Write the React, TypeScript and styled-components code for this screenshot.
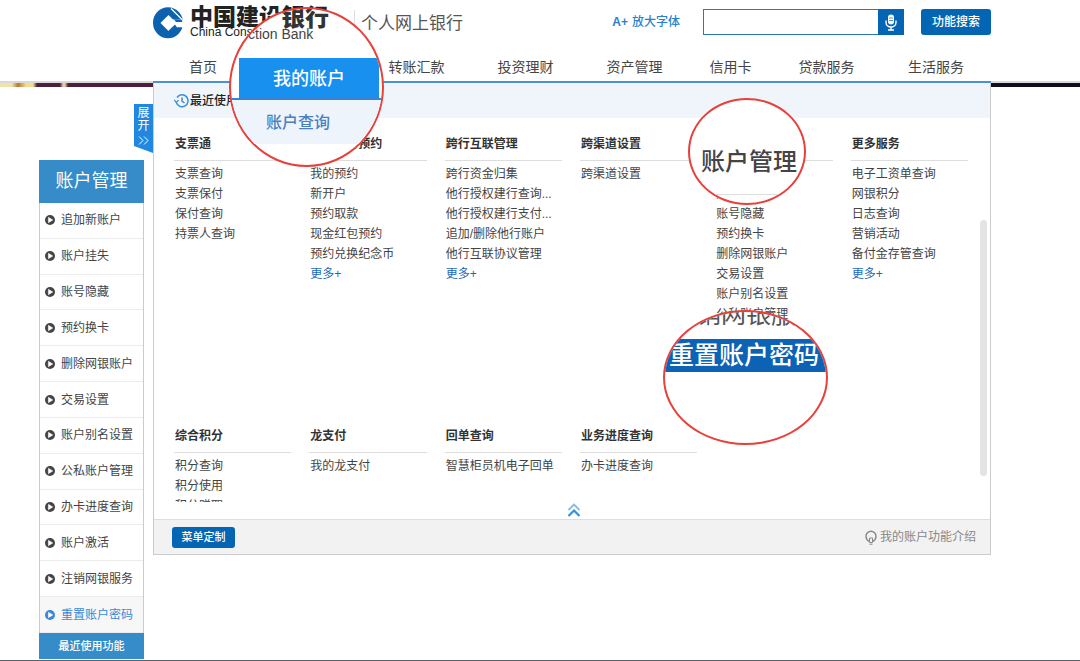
import React from "react";
import styled, { createGlobalStyle, css } from "styled-components";

const GlobalStyle = createGlobalStyle`
  * { box-sizing: border-box; }
  body {
    margin: 0;
    background: #fff;
    color: #444;
    font: 12px/20px "Liberation Sans", "Noto Sans CJK SC", sans-serif;
  }
  a { color: inherit; text-decoration: none; }
  button, input { font: inherit; }
  ul, h1, h2, p { margin: 0; padding: 0; list-style: none; font-weight: 400; }
  svg { display: block; flex: none; }
`;

const Page = styled.div`
  position: relative;
  display: flex;
  flex-direction: column;
  min-height: 100vh;
`;

/* ---------- header ---------- */

const Header = styled.header`
  padding: 0 89px 0 153px;
  border-bottom: 2px solid #d9d9dc;
`;

const TopRow = styled.div`
  display: flex;
  align-items: flex-start;
  height: 52px;
  padding-top: 7px;
`;

const Brand = styled.a`
  display: flex;
  gap: 7px;
`;

const BrandText = styled.span`
  display: flex;
  flex-direction: column;
  padding-top: 1px;
  color: #222;
`;

const BrandName = styled.strong`
  font-size: 23px;
  line-height: 18px;
  font-weight: 900;
`;

const BrandEnglish = styled.span`
  font-size: 12px;
  line-height: 12px;
`;

const SiteTitle = styled.h1`
  margin: 3px 0 0 26px;
  padding-left: 6px;
  border-left: 1px solid #ddd;
  font-size: 17px;
  line-height: 27px;
  color: #555;
`;

const Tools = styled.div`
  display: flex;
  align-items: center;
  height: 26px;
  margin: 2px 0 0 auto;
`;

const FontSizeLink = styled.a`
  display: flex;
  gap: 4px;
  margin-right: 23px;
  color: #2a80d0;
  font-weight: 500;
`;

const SearchBox = styled.form`
  display: flex;
  height: 26px;
`;

const SearchInput = styled.input`
  width: 175px;
  height: 26px;
  padding: 0 6px;
  border: 1px solid #2a7ab8;
  border-right: 0;
  outline: none;
`;

const MicButton = styled.button`
  display: grid;
  place-items: center;
  width: 26px;
  padding: 0;
  border: 0;
  background: #0565b5;
`;

const PrimaryButton = styled.button<{ $small?: boolean }>`
  padding: 0;
  border: 0;
  border-radius: 3px;
  background: #0565b5;
  color: #fff;
  font-weight: 500;
  ${(p) =>
    p.$small
      ? css`
          width: 63px;
          height: 21px;
          font-size: 11px;
        `
      : css`
          width: 70px;
          height: 26px;
          margin-left: 17px;
        `}
`;

const Nav = styled.nav`
  display: grid;
  grid-template-columns: 100fr 109fr 109fr 109fr 109fr 83fr 109fr 110fr;
  height: 31px;
  margin-bottom: -2px;
  border-bottom: 2px solid #4a90d9;
`;

const NavLink = styled.a`
  font-size: 14px;
  line-height: 30px;
  text-align: center;
`;

/* ---------- body ---------- */

const Body = styled.main`
  display: grid;
  grid-template-columns: 153px 1fr 89px;
  align-items: start;
  flex: 1;
`;

const SideColumn = styled.div`
  display: flex;
  flex-direction: column;
`;

const BannerStrip = styled.div<{ $left?: boolean }>`
  height: 4px;
  background: ${(p) =>
    p.$left
      ? "linear-gradient(90deg, #f0e2a8 0 12px, #b5762f 18px, #f3dc8e 26px 33px, #4d1f3c 37px 60px, #e8c9a0 63px 65px, #4d1f3c 68px)"
      : "#120d1e"};
`;

const ExpandTab = styled.button`
  display: flex;
  flex-direction: column;
  align-items: center;
  align-self: flex-end;
  width: 19px;
  height: 49px;
  margin-top: 17px;
  padding: 3px 0 0;
  border: 0;
  background: #2088e0;
  clip-path: polygon(0 0, 100% 0, 100% 100%, 0 42px);
  color: #fff;
  line-height: 13px;
`;

const ExpandArrow = styled.span`
  margin-top: 3px;
`;

const Sidebar = styled.aside`
  align-self: flex-end;
  width: 105px;
  margin: 7px 9px 0 0;
`;

const SidebarTitle = styled.h2`
  height: 43px;
  background: #358cc8;
  color: #fff;
  font-size: 18px;
  line-height: 43px;
  text-align: center;
`;

const SidebarList = styled.ul`
  display: grid;
  grid-auto-rows: 1fr;
  height: 430px;
  border: solid #ccc;
  border-width: 0 1px;
`;

const SidebarItem = styled.li<{ $active?: boolean }>`
  display: flex;
  border-bottom: 1px solid #ececec;
  background: ${(p) => (p.$active ? "#f7f7f7" : "#fff")};
  color: ${(p) => (p.$active ? "#3a88d6" : "#444")};
`;

const SidebarLink = styled.a`
  display: flex;
  align-items: center;
  gap: 6px;
  padding-left: 5px;
`;

const RecentButton = styled.button`
  display: block;
  width: 100%;
  height: 26px;
  padding: 0;
  border: 0;
  background: #358cc8;
  color: #fff;
  font-size: 11px;
  font-weight: 500;
`;

/* ---------- menu panel ---------- */

const Panel = styled.section`
  position: relative;
  border: solid #ccc;
  border-width: 0 1px 1px;
  background: #fff;
`;

const RecentBar = styled.div`
  display: flex;
  align-items: center;
  gap: 1px;
  height: 35px;
  padding-left: 20px;
  background: #eff5fb;
  color: #222;
  font-weight: 500;
`;

const Groups = styled.div`
  display: grid;
  grid-template-columns: repeat(6, 1fr);
  grid-auto-rows: 292px;
  column-gap: 18px;
  height: 384px;
  padding: 16px 22px 0 20px;
  overflow: hidden;
`;

const Group = styled.section`
  min-width: 0;
  padding-left: 1px;
  white-space: nowrap;
`;

const GroupTitle = styled.h2`
  margin: 0 0 3px -1px;
  padding: 0 0 6px 1px;
  border-bottom: 1px solid #ddd;
  font-size: 12px;
  font-weight: 700;
  color: #333;
`;

const GroupLink = styled.a<{ $more?: boolean }>`
  display: block;
  color: ${(p) => (p.$more ? "#1a69b8" : "#444")};
`;

const ScrollThumb = styled.div`
  position: absolute;
  top: 137px;
  right: 3px;
  width: 7px;
  height: 256px;
  border-radius: 4px;
  background: #e4e4e4;
`;

const CollapseButton = styled.button`
  display: block;
  width: 24px;
  height: 17px;
  margin: 0 auto;
  padding: 0 0 2px 7px;
  border: 0;
  background: none;
`;

const PanelFooter = styled.footer`
  display: flex;
  align-items: center;
  justify-content: space-between;
  height: 35px;
  padding: 0 14px 0 18px;
  border-top: 1px solid #cfe2f2;
  background: #f2f2f2;
`;

const IntroLink = styled.a`
  display: flex;
  align-items: center;
  gap: 3px;
  color: #888;
`;

const BottomEdge = styled.div`
  height: 1px;
  background: #59636f;
`;

/* ---------- magnifier circles ---------- */

const Lens = styled.div<{ $x: number; $y: number; $w: number; $h: number }>`
  position: absolute;
  left: ${(p) => p.$x}px;
  top: ${(p) => p.$y}px;
  width: ${(p) => p.$w}px;
  height: ${(p) => p.$h}px;
  overflow: hidden;
  border: 2px solid #e8403a;
  border-radius: 50%;
  background: #fff;
  white-space: nowrap;
`;

const LensBrand = styled.div`
  height: 49px;
  color: #333;
`;

const LensBrandName = styled.p`
  padding-left: 50px;
  font-size: 24px;
  line-height: 17px;
  font-weight: 900;
`;

const LensBrandEnglish = styled.p`
  padding-left: 17px;
  font-size: 14px;
  line-height: 16px;
  color: #444;
`;

const LensTab = styled.p`
  height: 40px;
  margin: 0 3px 0 8px;
  background: #1890f0;
  color: #fff;
  font-size: 18px;
  line-height: 42px;
  font-weight: 500;
  text-align: center;
`;

const LensSubmenu = styled.p`
  height: 46px;
  padding-left: 35px;
  border-top: 2px solid #3b82d0;
  background: #edf4fb;
  color: #4a80c0;
  font-size: 16px;
  line-height: 46px;
  font-weight: 500;
`;

const LensHeading = styled.p`
  margin-top: 46px;
  padding-left: 11px;
  color: #444;
  font-size: 24px;
  line-height: 32px;
  font-weight: 500;
`;

const LensRule = styled.div`
  height: 1px;
  margin: 16px 20px 0 25px;
  background: #ddd;
`;

const LensRow = styled.p`
  height: 27px;
  padding-left: 6px;
  font-size: 25px;
  line-height: 4px;
  color: #555;
`;

const LensSelected = styled.p`
  height: 33px;
  padding-left: 4px;
  background: #0c62b4;
  color: #fff;
  font-size: 25px;
  line-height: 33px;
  font-weight: 500;
`;

/* ---------- icons ---------- */

const BankLogo = () => (
  <svg width="30" height="32" viewBox="0 0 30 32" aria-hidden="true">
    <ellipse cx="15" cy="15.800" rx="15" ry="15.500" fill="#0d62b0" />
    <path d="M7.500 16L15.500 8 23.500 16 15.500 24z" fill="#fff" />
    <path d="M20 12.500H30V20.500H20z" fill="#fff" />
    <path d="M21 12.500h7.500l1 2.500h-6.500z" fill="#0d62b0" />
    <path d="M15.500 24L22 17.500l2 3H29L24 27z" fill="#0d62b0" />
    <path d="M18 1.500L29 12.500" stroke="#fff" strokeWidth="1.200" />
  </svg>
);

const MicIcon = () => (
  <svg width="12" height="17" viewBox="0 0 12 17" fill="none" stroke="#fff" aria-hidden="true">
    <rect x="3" y="0.5" width="6" height="10" rx="3" fill="#fff" stroke="none" />
    <path d="M1 6.500v2a5 4.500 0 0 0 10 0v-2M6 13v3M3 16h6" strokeWidth="1.400" />
    <path d="M4 4h4M4 6.500h4" stroke="#0565b5" strokeWidth="0.700" />
  </svg>
);

const HistoryIcon = () => (
  <svg width="15" height="14" viewBox="0 0 15 14" fill="none" stroke="#3a8fd8" strokeWidth="1.500" aria-hidden="true">
    <path d="M2.300 8.500A6 6 0 1 0 3 3.500" />
    <path d="M0.300 5.800L2.200 8.400 4.600 6.200" strokeWidth="1.200" />
    <path d="M8 3.500V7.200L10.500 9" />
  </svg>
);

const PlayIcon = () => (
  <svg width="10" height="10" viewBox="0 0 10 10" aria-hidden="true">
    <circle cx="5" cy="5" r="5" fill="currentColor" />
    <path d="M3.400 2.300L7.800 5 3.400 7.700z" fill="#fff" stroke="#fff" strokeWidth="0.500" />
  </svg>
);

const ExpandIcon = () => (
  <svg width="11" height="9" viewBox="0 0 11 9" fill="none" stroke="#fff" aria-hidden="true">
    <path d="M1 .5L5 4.500 1 8.500M6 .5L10 4.500 6 8.500" />
  </svg>
);

const CollapseIcon = () => (
  <svg width="14" height="14" viewBox="0 0 14 14" fill="none" strokeWidth="1.800" aria-hidden="true">
    <path d="M1.500 7L7 1.500 12.500 7" stroke="#82bce8" />
    <path d="M1.500 13L7 7.500 12.500 13" stroke="#3191dc" strokeWidth="2.200" />
  </svg>
);

const BulbIcon = () => (
  <svg width="12" height="15" viewBox="0 0 12 15" fill="none" stroke="#888" strokeWidth="1.400" aria-hidden="true">
    <path d="M4 11.300C2 10.300 1 8.500 1 6.300a5 5 0 0 1 10 0c0 2.200-1 4-3 5" />
    <path d="M4.500 12.500V8h3v4.500z" strokeWidth="1" />
    <path d="M4.500 14.200h3" strokeWidth="1" />
  </svg>
);

/* ---------- data ---------- */

const navItems = ["首页", "我的账户", "转账汇款", "投资理财", "资产管理", "信用卡", "贷款服务", "生活服务"];

const accountItems = [
  "追加新账户",
  "账户挂失",
  "账号隐藏",
  "预约换卡",
  "删除网银账户",
  "交易设置",
  "账户别名设置",
  "公私账户管理",
  "办卡进度查询",
  "账户激活",
  "注销网银服务",
  "重置账户密码",
];

const groups: { title: string; items: string[]; more?: boolean }[] = [
  { title: "支票通", items: ["支票查询", "支票保付", "保付查询", "持票人查询"] },
  { title: "网点业务预约", items: ["我的预约", "新开户", "预约取款", "现金红包预约", "预约兑换纪念币"], more: true },
  {
    title: "跨行互联管理",
    items: ["跨行资金归集", "他行授权建行查询...", "他行授权建行支付...", "追加/删除他行账户", "他行互联协议管理"],
    more: true,
  },
  { title: "跨渠道设置", items: ["跨渠道设置"] },
  { title: "账户管理", items: accountItems.slice(0, 8) },
  { title: "更多服务", items: ["电子工资单查询", "网银积分", "日志查询", "营销活动", "备付金存管查询"], more: true },
  { title: "综合积分", items: ["积分查询", "积分使用", "积分赠取"] },
  { title: "龙支付", items: ["我的龙支付"] },
  { title: "回单查询", items: ["智慧柜员机电子回单"] },
  { title: "业务进度查询", items: ["办卡进度查询"] },
];

export default function App() {
  return (
    <Page>
      <GlobalStyle />
      <Header>
        <TopRow>
          <Brand href="#">
            <BankLogo />
            <BrandText>
              <BrandName>中国建设银行</BrandName>
              <BrandEnglish>China Construction Bank</BrandEnglish>
            </BrandText>
          </Brand>
          <SiteTitle>个人网上银行</SiteTitle>
          <Tools>
            <FontSizeLink href="#">
              <strong>A+</strong>放大字体
            </FontSizeLink>
            <SearchBox onSubmit={(e) => e.preventDefault()}>
              <SearchInput type="text" aria-label="功能搜索" />
              <MicButton type="button" aria-label="语音">
                <MicIcon />
              </MicButton>
              <PrimaryButton type="submit">功能搜索</PrimaryButton>
            </SearchBox>
          </Tools>
        </TopRow>
        <Nav>
          {navItems.map((item) => (
            <NavLink href="#" key={item}>
              {item}
            </NavLink>
          ))}
        </Nav>
      </Header>

      <Body>
        <SideColumn>
          <BannerStrip $left />
          <ExpandTab type="button">
            <span>展</span>
            <span>开</span>
            <ExpandArrow>
              <ExpandIcon />
            </ExpandArrow>
          </ExpandTab>
          <Sidebar>
            <SidebarTitle>账户管理</SidebarTitle>
            <SidebarList>
              {accountItems.map((item, i) => (
                <SidebarItem key={item} $active={i === accountItems.length - 1}>
                  <SidebarLink href="#">
                    <PlayIcon />
                    {item}
                  </SidebarLink>
                </SidebarItem>
              ))}
            </SidebarList>
            <RecentButton type="button">最近使用功能</RecentButton>
          </Sidebar>
        </SideColumn>

        <Panel>
          <RecentBar>
            <HistoryIcon />
            最近使用
          </RecentBar>
          <Groups>
            {groups.map((group) => (
              <Group key={group.title}>
                <GroupTitle>{group.title}</GroupTitle>
                {group.items.map((item) => (
                  <GroupLink href="#" key={item}>
                    {item}
                  </GroupLink>
                ))}
                {group.more && (
                  <GroupLink href="#" $more>
                    更多+
                  </GroupLink>
                )}
              </Group>
            ))}
          </Groups>
          <ScrollThumb />
          <CollapseButton type="button" aria-label="收起">
            <CollapseIcon />
          </CollapseButton>
          <PanelFooter>
            <PrimaryButton type="button" $small>
              菜单定制
            </PrimaryButton>
            <IntroLink href="#">
              <BulbIcon />
              我的账户功能介绍
            </IntroLink>
          </PanelFooter>
        </Panel>

        <BannerStrip />
      </Body>
      <BottomEdge />

      <Lens $x={229} $y={7} $w={155} $h={160}>
        <LensBrand>
          <LensBrandName>银行</LensBrandName>
          <LensBrandEnglish>ction Bank</LensBrandEnglish>
        </LensBrand>
        <LensTab>我的账户</LensTab>
        <LensSubmenu>账户查询</LensSubmenu>
      </Lens>
      <Lens $x={688} $y={98} $w={118} $h={107}>
        <LensHeading>账户管理</LensHeading>
        <LensRule />
      </Lens>
      <Lens $x={663} $y={310} $w={165} $h={135}>
        <LensRow>注销网银服务</LensRow>
        <LensSelected>重置账户密码</LensSelected>
      </Lens>
    </Page>
  );
}
